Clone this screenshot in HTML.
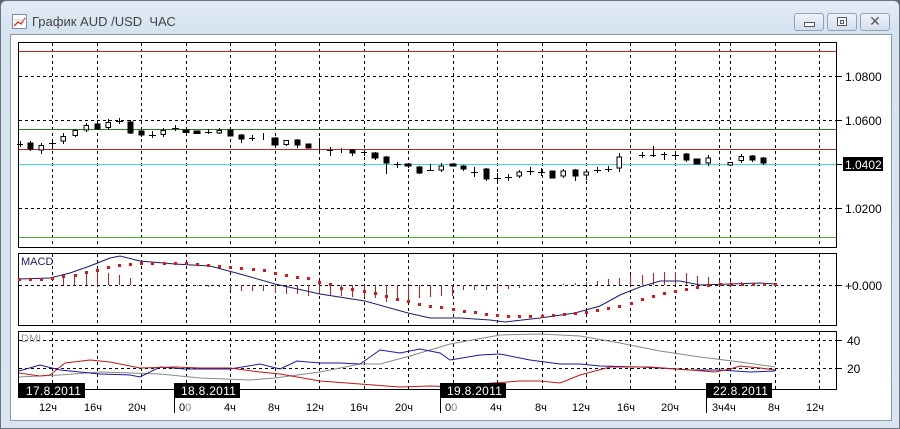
<!DOCTYPE html>
<html><head><meta charset="utf-8"><style>
html,body{margin:0;padding:0;width:900px;height:429px;overflow:hidden;background:#5a6470}
.win{position:absolute;left:0;top:0;width:898px;height:427px;border:1px solid #6d7480;border-radius:6px 6px 0 0;background:linear-gradient(#e4edf7,#d5e2f0 30px,#dae5f2);}
.title{position:absolute;left:31px;top:13px;font:13px "Liberation Sans","DejaVu Sans",sans-serif;color:#444}
.inner{position:absolute;left:9px;top:33px;width:880px;height:385px;background:#fff;border:1px solid #8a99ab}
.btn{position:absolute;top:12px;width:28px;height:16px;border:1px solid #8ea2bb;border-radius:3px;background:linear-gradient(#eef3f9,#d3deec)}
svg text{font-family:"Liberation Sans","DejaVu Sans",sans-serif}
</style></head><body>
<div class="win">
<svg style="position:absolute;left:11px;top:13px" width="16" height="16"><rect x="0.5" y="0.5" width="14" height="14" fill="#fff" stroke="#7a8ea8"/><polyline points="2,12 6,8 9,10 13,4" fill="none" stroke="#d03020" stroke-width="1.3"/><line x1="2" y1="6" x2="13" y2="6" stroke="#c0c8d8"/></svg>
<div class="title">График AUD /USD&nbsp; ЧАС</div>
<div class="btn" style="left:793px"><div style="position:absolute;left:9px;top:8px;width:9px;height:3px;border:1px solid #556;background:#fff"></div></div>
<div class="btn" style="left:826px"><div style="position:absolute;left:9px;top:3px;width:8px;height:7px;border:1px solid #556;background:#fff"><div style="margin:2px;height:2px;border:1px solid #556"></div></div></div>
<div class="btn" style="left:859px;font:bold 14px 'DejaVu Sans',sans-serif;color:#556;text-align:center;line-height:16px">✕</div>
<div class="inner"></div>
</div>
<svg style="position:absolute;left:0;top:0" width="900" height="429" shape-rendering="crispEdges">
<g fill="none" stroke="#000" stroke-width="1">
<rect x="18.5" y="42.5" width="818" height="205"/>
<rect x="18.5" y="253.5" width="818" height="72"/>
<rect x="18.5" y="331.5" width="818" height="58"/>
</g>
<g stroke="#000" stroke-dasharray="3,3">
<path d="M52.5 43V247M97.5 43V247M141.5 43V247M186.5 43V247M230.5 43V247M275.5 43V247M319.5 43V247M364.5 43V247M408.5 43V247M453.5 43V247M497.5 43V247M542.5 43V247M586.5 43V247M630.5 43V247M675.5 43V247M719.5 43V247M730.5 43V247M775.5 43V247M819.5 43V247"/>
<path d="M52.5 254V325M97.5 254V325M141.5 254V325M186.5 254V325M230.5 254V325M275.5 254V325M319.5 254V325M364.5 254V325M408.5 254V325M453.5 254V325M497.5 254V325M542.5 254V325M586.5 254V325M630.5 254V325M675.5 254V325M719.5 254V325M730.5 254V325M775.5 254V325M819.5 254V325"/>
<path d="M52.5 332V389M97.5 332V389M141.5 332V389M186.5 332V389M230.5 332V389M275.5 332V389M319.5 332V389M364.5 332V389M408.5 332V389M453.5 332V389M497.5 332V389M542.5 332V389M586.5 332V389M630.5 332V389M675.5 332V389M719.5 332V389M730.5 332V389M775.5 332V389M819.5 332V389"/>
<path d="M19 76.5H836M19 120.5H836M19 208.5H836M19 285.5H836M19 340.5H836M19 368.5H836"/>
</g>
<g stroke="#000"><path d="M836 76.5h6M836 120.5h6M836 164.5h6M836 208.5h6M836 285.5h6M836 340.5h6M836 368.5h6"/></g>
<g stroke-width="1">
<line x1="19" y1="51.5" x2="836" y2="51.5" stroke="#c02828"/>
<line x1="19" y1="149.5" x2="836" y2="149.5" stroke="#c02828"/>
<line x1="19" y1="129.5" x2="836" y2="129.5" stroke="#2a7a2a"/>
<line x1="19" y1="237.5" x2="836" y2="237.5" stroke="#48b038"/>
<line x1="19" y1="164.5" x2="836" y2="164.5" stroke="#40d8dc"/>
</g>
<g stroke="#000" fill="#000">
<path d="M20.5 141V147M17 144.5h6"/>
<path d="M30.5 141V151"/><rect x="28" y="143" width="5" height="6"/>
<path d="M41.5 143V154"/><rect x="39" y="145.5" width="4.5" height="4.5" fill="#fff"/>
<path d="M52.5 139V149M49 143.5h7"/>
<path d="M63.5 133V144"/><rect x="61" y="136.5" width="4.5" height="4.5" fill="#fff"/>
<path d="M75.5 129V137"/><rect x="73" y="130.5" width="4.5" height="5" fill="#fff"/>
<path d="M86.5 123V132"/><rect x="84" y="125.5" width="4.5" height="4.5" fill="#fff"/>
<path d="M97.5 121V130"/><rect x="95" y="124" width="5" height="5"/>
<path d="M108.5 119V130"/><rect x="106" y="122.5" width="4.5" height="5" fill="#fff"/>
<path d="M119.5 118V124M116 121.5h7"/>
<rect x="128" y="122" width="5" height="11"/><path d="M130.5 120V134"/>
<rect x="139" y="131" width="5" height="4"/><path d="M141.5 130V137"/>
<path d="M152.5 131V138M149 135.5h7"/>
<path d="M163.5 128V137"/><rect x="161" y="130.5" width="4.5" height="4" fill="#fff"/>
<path d="M175.5 125V131M172 128.5h7"/>
<rect x="183" y="130" width="6" height="2.5"/><path d="M186.5 129V134"/>
<rect x="194" y="131" width="6" height="2.5"/>
<path d="M208.5 129V134M205 132.5h7"/>
<path d="M219.5 128V134"/><rect x="217" y="130.5" width="4.5" height="2.5" fill="#fff"/>
<rect x="228" y="130" width="5" height="6"/>
<rect x="239" y="135" width="5" height="4"/><path d="M241.5 134V143"/>
<path d="M252.5 135V141M249 138.5h6"/>
<path d="M263.5 133V140"/>
<rect x="272" y="138" width="6" height="7"/><path d="M275.5 137V147"/>
<path d="M286.5 140V146"/><rect x="284" y="140.5" width="4.5" height="4" fill="#fff"/>
<rect x="295" y="140" width="5" height="5"/><path d="M297.5 139V148"/>
<rect x="306" y="144" width="5" height="4"/>
<path d="M319.5 138V151"/>
<path d="M330.5 147V156M327 150.5h6"/>
<path d="M341.5 148V153"/>
<rect x="350" y="150" width="5" height="3"/><path d="M352.5 149V156"/>
<path d="M364.5 150V156M361 152.5h6"/>
<rect x="372" y="153" width="6" height="5"/><path d="M375.5 152V160"/>
<rect x="384" y="157" width="5" height="6"/><path d="M386.5 156V174"/>
<path d="M397.5 162V168M394 164.5h7"/>
<rect x="405" y="164" width="6" height="2"/><path d="M408.5 163V168"/>
<rect x="417" y="167" width="5" height="6"/><path d="M419.5 166V174"/>
<path d="M430.5 164V171M427 170.5h7"/>
<path d="M441.5 163V172"/><rect x="439" y="166" width="4.5" height="4" fill="#fff"/>
<rect x="450" y="164" width="6" height="2"/>
<rect x="461" y="166" width="5" height="3"/><path d="M463.5 165V171"/>
<path d="M474.5 167V177M471 172.5h7"/>
<rect x="484" y="169" width="5" height="10"/><path d="M486.5 168V181"/>
<path d="M497.5 173V181M494 178.5h7"/>
<path d="M508.5 174V181M505 177.5h7"/>
<path d="M519.5 170V178"/><rect x="517" y="172" width="4.5" height="4" fill="#fff"/>
<path d="M530.5 167V175M527 171.5h7"/>
<path d="M541.5 168V176M538 172.5h7"/>
<rect x="550" y="171" width="5" height="7"/>
<path d="M563.5 169V178"/><rect x="561" y="171" width="4.5" height="5" fill="#fff"/>
<rect x="573" y="170" width="5" height="6"/><path d="M575.5 169V181"/>
<path d="M586.5 169V180"/><rect x="584" y="172" width="4.5" height="3" fill="#fff"/>
<path d="M597.5 167V173M594 170.5h7"/>
<path d="M608.5 166V172M605 169.5h7"/>
<path d="M619.5 153V172"/><rect x="617" y="157" width="4.5" height="11" fill="#fff"/>
<path d="M642.5 152V158M639 155.5h6"/>
<path d="M653.5 146V157M650 155.5h6"/>
<path d="M664.5 152V160M661 154.5h6"/>
<path d="M675.5 151V158M672 155.5h7"/>
<rect x="684" y="154" width="5" height="6"/><path d="M686.5 153V162"/>
<rect x="694" y="159" width="6" height="5"/>
<path d="M708.5 155V166"/><rect x="706" y="158" width="4.5" height="5" fill="#fff"/>
<path d="M730.5 162V166"/><rect x="728" y="162.5" width="4.5" height="2.5" fill="#fff"/>
<path d="M741.5 154V163"/><rect x="739" y="156.5" width="4.5" height="4" fill="#fff"/>
<rect x="750" y="156" width="5" height="4"/><path d="M752.5 155V162"/>
<rect x="761" y="158" width="5" height="5"/><path d="M763.5 157V165"/>
</g>
<g stroke="#d21a1a">
<path d="M63.5 285V278M74.5 285V276M86.5 285V273M97.5 285V271M108.5 285V273M119.5 285V275M130.5 285V278"/>
<path d="M197.5 285V286M208.5 285V287M219.5 285V287M230.5 285V290M241.5 285V291M252.5 285V291M263.5 285V291M275.5 285V293M286.5 285V294M297.5 285V294M308.5 285V296M319.5 285V294M330.5 285V296M341.5 285V296M352.5 285V297M364.5 285V297M375.5 285V298M386.5 285V302M397.5 285V301M408.5 285V300M419.5 285V298M430.5 285V297M441.5 285V296M452.5 285V296M463.5 285V290M474.5 285V290M486.5 285V290M497.5 285V291M508.5 285V289M519.5 285V288M530.5 285V286"/>
<path d="M563.5 285V284M575.5 285V283M586.5 285V282M597.5 285V281M608.5 285V279M619.5 285V278M630.5 285V275M642.5 285V275M653.5 285V273M664.5 285V272M675.5 285V272M686.5 285V273M697.5 285V276M708.5 285V277M719.5 285V280M730.5 285V281M741.5 285V282"/>
</g>
<polyline fill="none" stroke="#1a1a6e" shape-rendering="auto" points="19,279 50,278 70,273 90,266 110,258 120,256 140,261 175,264 210,266 240,274 275,284 320,294 365,301 408,313 430,318 460,318 490,320 505,322 540,318 575,313 600,306 620,295 640,287 660,281 680,281 700,285 730,284 760,283 775,284"/>
<g fill="#d21a1a">
<rect x="18" y="278" width="3" height="3"/><rect x="29" y="278" width="3" height="3"/><rect x="40" y="278" width="3" height="3"/><rect x="51" y="277" width="3" height="3"/><rect x="62" y="275" width="3" height="3"/><rect x="74" y="274" width="3" height="3"/><rect x="85" y="271" width="3" height="3"/><rect x="96" y="269" width="3" height="3"/><rect x="107" y="266" width="3" height="3"/><rect x="118" y="264" width="3" height="3"/><rect x="129" y="263" width="3" height="3"/><rect x="140" y="262" width="3" height="3"/><rect x="151" y="262" width="3" height="3"/><rect x="163" y="262" width="3" height="3"/><rect x="174" y="262" width="3" height="3"/><rect x="185" y="262" width="3" height="3"/><rect x="196" y="263" width="3" height="3"/><rect x="207" y="264" width="3" height="3"/><rect x="218" y="265" width="3" height="3"/><rect x="229" y="266" width="3" height="3"/><rect x="240" y="267" width="3" height="3"/><rect x="252" y="268" width="3" height="3"/><rect x="263" y="269" width="3" height="3"/><rect x="274" y="272" width="3" height="3"/><rect x="285" y="274" width="3" height="3"/><rect x="296" y="276" width="3" height="3"/><rect x="307" y="277" width="3" height="3"/><rect x="318" y="281" width="3" height="3"/><rect x="329" y="283" width="3" height="3"/><rect x="340" y="287" width="3" height="3"/><rect x="351" y="288" width="3" height="3"/><rect x="363" y="290" width="3" height="3"/><rect x="374" y="292" width="3" height="3"/><rect x="385" y="295" width="3" height="3"/><rect x="396" y="298" width="3" height="3"/><rect x="407" y="300" width="3" height="3"/><rect x="418" y="303" width="3" height="3"/><rect x="429" y="305" width="3" height="3"/><rect x="440" y="306" width="3" height="3"/><rect x="452" y="308" width="3" height="3"/><rect x="463" y="310" width="3" height="3"/><rect x="474" y="311" width="3" height="3"/><rect x="485" y="313" width="3" height="3"/><rect x="496" y="314" width="3" height="3"/><rect x="507" y="315" width="3" height="3"/><rect x="518" y="315" width="3" height="3"/><rect x="529" y="315" width="3" height="3"/><rect x="541" y="315" width="3" height="3"/><rect x="552" y="314" width="3" height="3"/><rect x="563" y="313" width="3" height="3"/><rect x="574" y="312" width="3" height="3"/><rect x="585" y="311" width="3" height="3"/><rect x="596" y="309" width="3" height="3"/><rect x="607" y="307" width="3" height="3"/><rect x="618" y="305" width="3" height="3"/><rect x="630" y="302" width="3" height="3"/><rect x="641" y="298" width="3" height="3"/><rect x="652" y="295" width="3" height="3"/><rect x="663" y="292" width="3" height="3"/><rect x="674" y="290" width="3" height="3"/><rect x="685" y="288" width="3" height="3"/><rect x="696" y="286" width="3" height="3"/><rect x="707" y="284" width="3" height="3"/><rect x="719" y="283" width="3" height="3"/><rect x="730" y="283" width="3" height="3"/><rect x="741" y="283" width="3" height="3"/><rect x="752" y="283" width="3" height="3"/><rect x="763" y="283" width="3" height="3"/><rect x="774" y="283" width="3" height="3"/>
</g>
<text x="21" y="265" font-size="11" fill="#1a1a6e">MACD</text>
<text x="21" y="342" font-size="11" fill="#999">DMI</text>
<g fill="none" shape-rendering="auto" stroke-width="1">
<polyline stroke="#888" points="19,377 60,375 100,372 130,373 160,374 200,378 250,380 275,378 320,372 360,364 380,364 410,356 450,344 500,335 540,334 580,336 620,343 660,351 700,357 740,362 775,367"/>
<polyline stroke="#1a1a9a" points="19,371 40,365 60,370 100,374 130,375 140,377 160,367 185,369 230,369 260,364 280,369 297,361 320,363 340,363 360,364 380,350 400,353 420,349 440,353 450,360 480,355 500,354 530,360 560,364 580,364 600,366 640,367 660,368 690,370 720,370 750,372 775,371"/>
<polyline stroke="#c01818" points="19,373 40,376 50,375 65,363 90,360 110,362 140,368 175,367 200,368 230,368 260,372 280,374 320,381 360,384 400,387 430,386 460,387 480,384 520,381 540,381 560,383 580,375 610,367 650,367 690,370 715,372 730,369 740,366 760,368 775,370"/>
</g>
<g font-size="12" fill="#000">
<text x="845" y="81">1.0800</text>
<text x="845" y="125">1.0600</text>
<text x="845" y="213">1.0200</text>
<text x="845" y="290">+0.000</text>
<text x="847" y="345">40</text>
<text x="847" y="373">20</text>
</g>
<rect x="843" y="157" width="40" height="14" fill="#000"/>
<text x="845" y="169" font-size="12" fill="#fff">1.0402</text>
<g fill="#000"><rect x="18" y="383" width="67" height="15"/><rect x="174" y="383" width="66" height="15"/><rect x="440" y="383" width="66" height="15"/><rect x="706" y="383" width="66" height="15"/></g>
<g font-size="12" fill="#fff" letter-spacing="0.3"><text x="26" y="395">17.8.2011</text><text x="181" y="395">18.8.2011</text><text x="447" y="395">19.8.2011</text><text x="713" y="395">22.8.2011</text></g>
<g stroke="#000"><path d="M174.5 398V413M440.5 398V413M706.5 398V413"/></g>
<g font-size="11" fill="#000">
<text x="39" y="411">12ч</text><text x="84" y="411">16ч</text><text x="128" y="411">20ч</text><text x="179" y="411">0<tspan fill="#888">0</tspan></text><text x="224" y="411">4ч</text><text x="268" y="411">8ч</text><text x="306" y="411">12ч</text><text x="350" y="411">16ч</text><text x="395" y="411">20ч</text><text x="445" y="411">0<tspan fill="#888">0</tspan></text><text x="490" y="411">4ч</text><text x="535" y="411">8ч</text><text x="572" y="411">12ч</text><text x="617" y="411">16ч</text><text x="661" y="411">20ч</text><text x="712" y="411">3ч4ч</text><text x="768" y="411">8ч</text><text x="806" y="411">12ч</text>
</g>
</svg>
</body></html>
